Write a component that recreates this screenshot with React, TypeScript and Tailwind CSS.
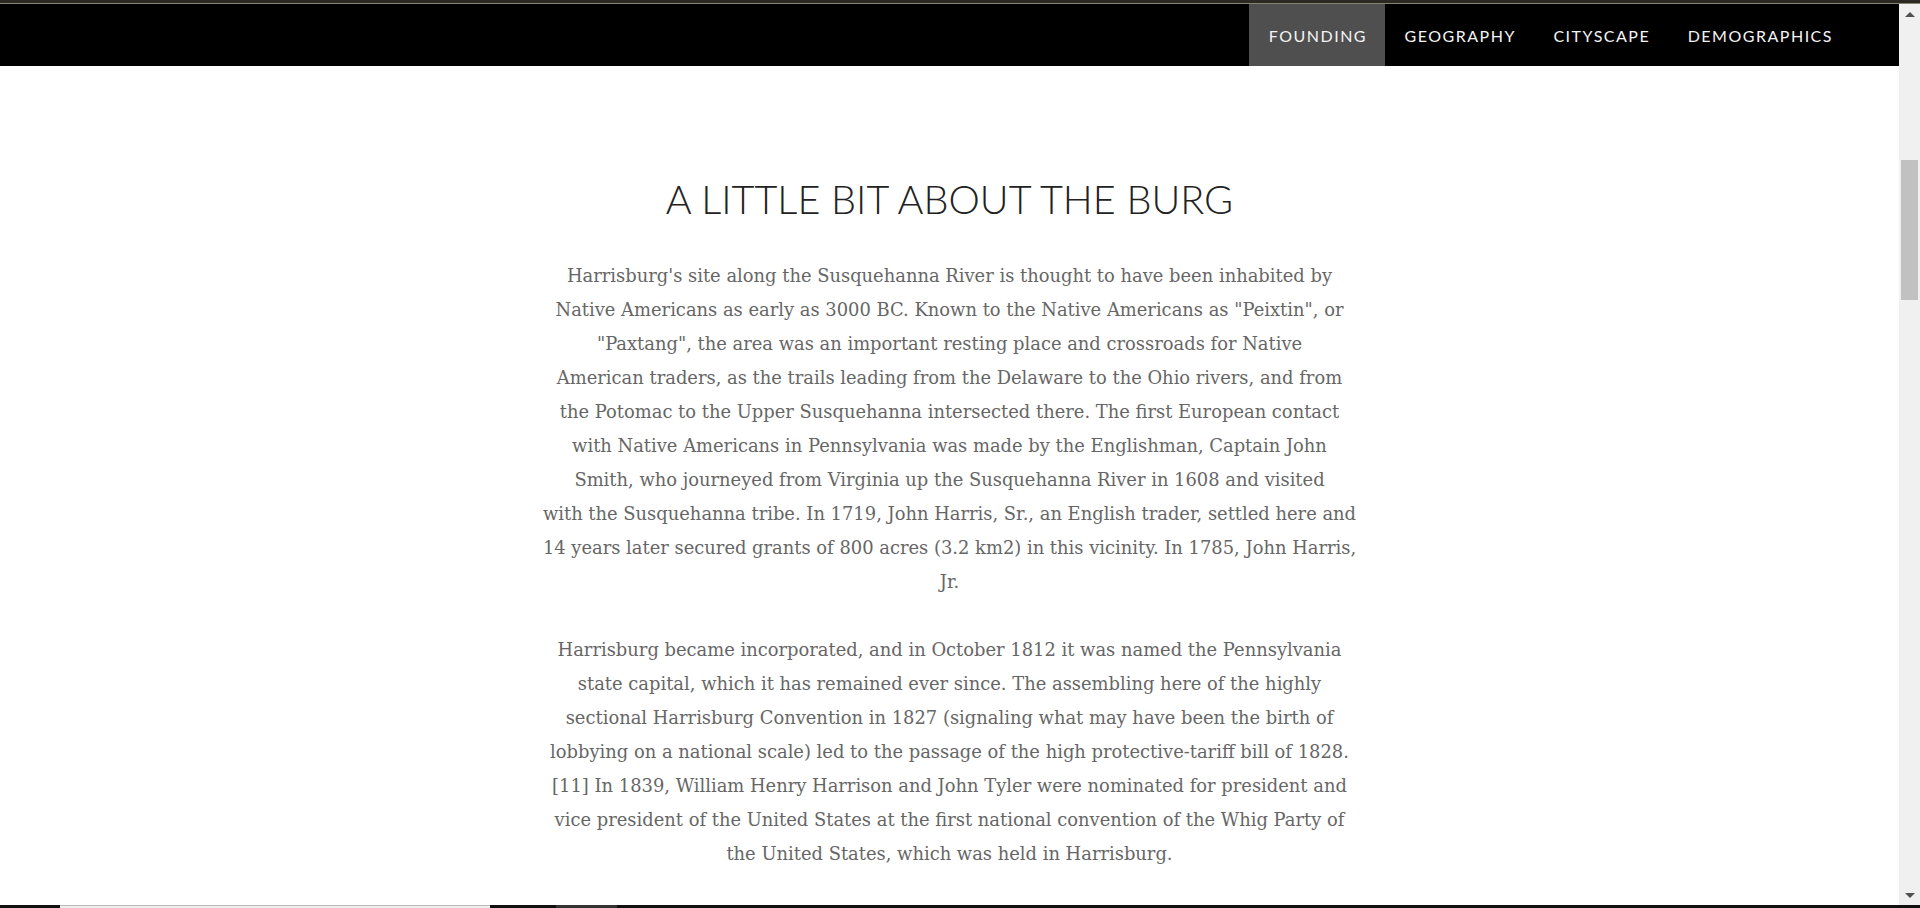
const navItems = ["Founding", "Geography", "Cityscape", "Demographics"];

const paragraphs: string[][] = [
  [
    "Harrisburg's site along the Susquehanna River is thought to have been inhabited by",
    'Native Americans as early as 3000 BC. Known to the Native Americans as "Peixtin", or',
    '"Paxtang", the area was an important resting place and crossroads for Native',
    "American traders, as the trails leading from the Delaware to the Ohio rivers, and from",
    "the Potomac to the Upper Susquehanna intersected there. The first European contact",
    "with Native Americans in Pennsylvania was made by the Englishman, Captain John",
    "Smith, who journeyed from Virginia up the Susquehanna River in 1608 and visited",
    "with the Susquehanna tribe. In 1719, John Harris, Sr., an English trader, settled here and",
    "14 years later secured grants of 800 acres (3.2 km2) in this vicinity. In 1785, John Harris,",
    "Jr.",
  ],
  [
    "Harrisburg became incorporated, and in October 1812 it was named the Pennsylvania",
    "state capital, which it has remained ever since. The assembling here of the highly",
    "sectional Harrisburg Convention in 1827 (signaling what may have been the birth of",
    "lobbying on a national scale) led to the passage of the high protective-tariff bill of 1828.",
    "[11] In 1839, William Henry Harrison and John Tyler were nominated for president and",
    "vice president of the United States at the first national convention of the Whig Party of",
    "the United States, which was held in Harrisburg.",
  ],
];

function Scrollbar() {
  return (
    <div className="w-[21px] flex-shrink-0 bg-[#f0f0f0] flex flex-col items-center">
      <div className="h-[20px] flex items-center justify-center">
        <div className="w-0 h-0 border-l-[5px] border-r-[5px] border-b-[5px] border-l-transparent border-r-transparent border-b-[#505050]" />
      </div>
      <div className="h-[136px]" />
      <div className="w-[17px] h-[140px] bg-[#c1c1c1]" />
      <div className="flex-1" />
      <div className="h-[20px] flex items-center justify-center">
        <div className="w-0 h-0 border-l-[5px] border-r-[5px] border-t-[5px] border-l-transparent border-r-transparent border-t-[#505050]" />
      </div>
    </div>
  );
}

export default function App() {
  return (
    <div className="h-[908px] w-full flex flex-col overflow-hidden bg-white">
      <div className="h-[3px] bg-[#2a2a22]" />
      <div className="h-px bg-[#85856f]" />
      <div className="flex flex-1 min-h-0">
        <div className="flex-1 flex flex-col min-w-0 overflow-hidden">
          <nav className="h-[62px] bg-black flex justify-end pr-[48px] flex-shrink-0">
            {navItems.map((item, i) => (
              <a
                key={item}
                className={`h-full flex items-center pt-[2px] pl-[19.5px] pr-[18px] uppercase text-[16px] tracking-[1.5px] text-[#f4f4f4] ${i === 0 ? "bg-[#4f4f4f]" : ""}`}
                style={{ fontFamily: "Lato, sans-serif" }}
              >
                {item}
              </a>
            ))}
          </nav>

          <section className="flex flex-col items-center pt-[109px]">
            <h1
              className="text-[39.6px] leading-[48px] font-light text-[#222] uppercase text-center mb-[36px]"
              style={{ fontFamily: "Lato, sans-serif" }}
            >
              A Little Bit About the Burg
            </h1>
            {paragraphs.map((lines, p) => (
              <p
                key={p}
                className="text-center text-[17.9px] leading-[34px] text-[#666] mb-[34px]"
                style={{ fontFamily: '"DejaVu Serif", serif' }}
              >
                {lines.map((line, i) => (
                  <span key={i} className="block whitespace-nowrap">
                    {line}
                  </span>
                ))}
              </p>
            ))}
          </section>
        </div>
        <Scrollbar />
      </div>
      <div className="h-[3px] flex bg-[#111]">
        <div className="w-[60px]" />
        <div className="w-[430px] bg-[#efefef] border-t border-[#bbb]" />
        <div className="w-[66px]" />
        <div className="w-[61px] bg-[#333]" />
      </div>
    </div>
  );
}
